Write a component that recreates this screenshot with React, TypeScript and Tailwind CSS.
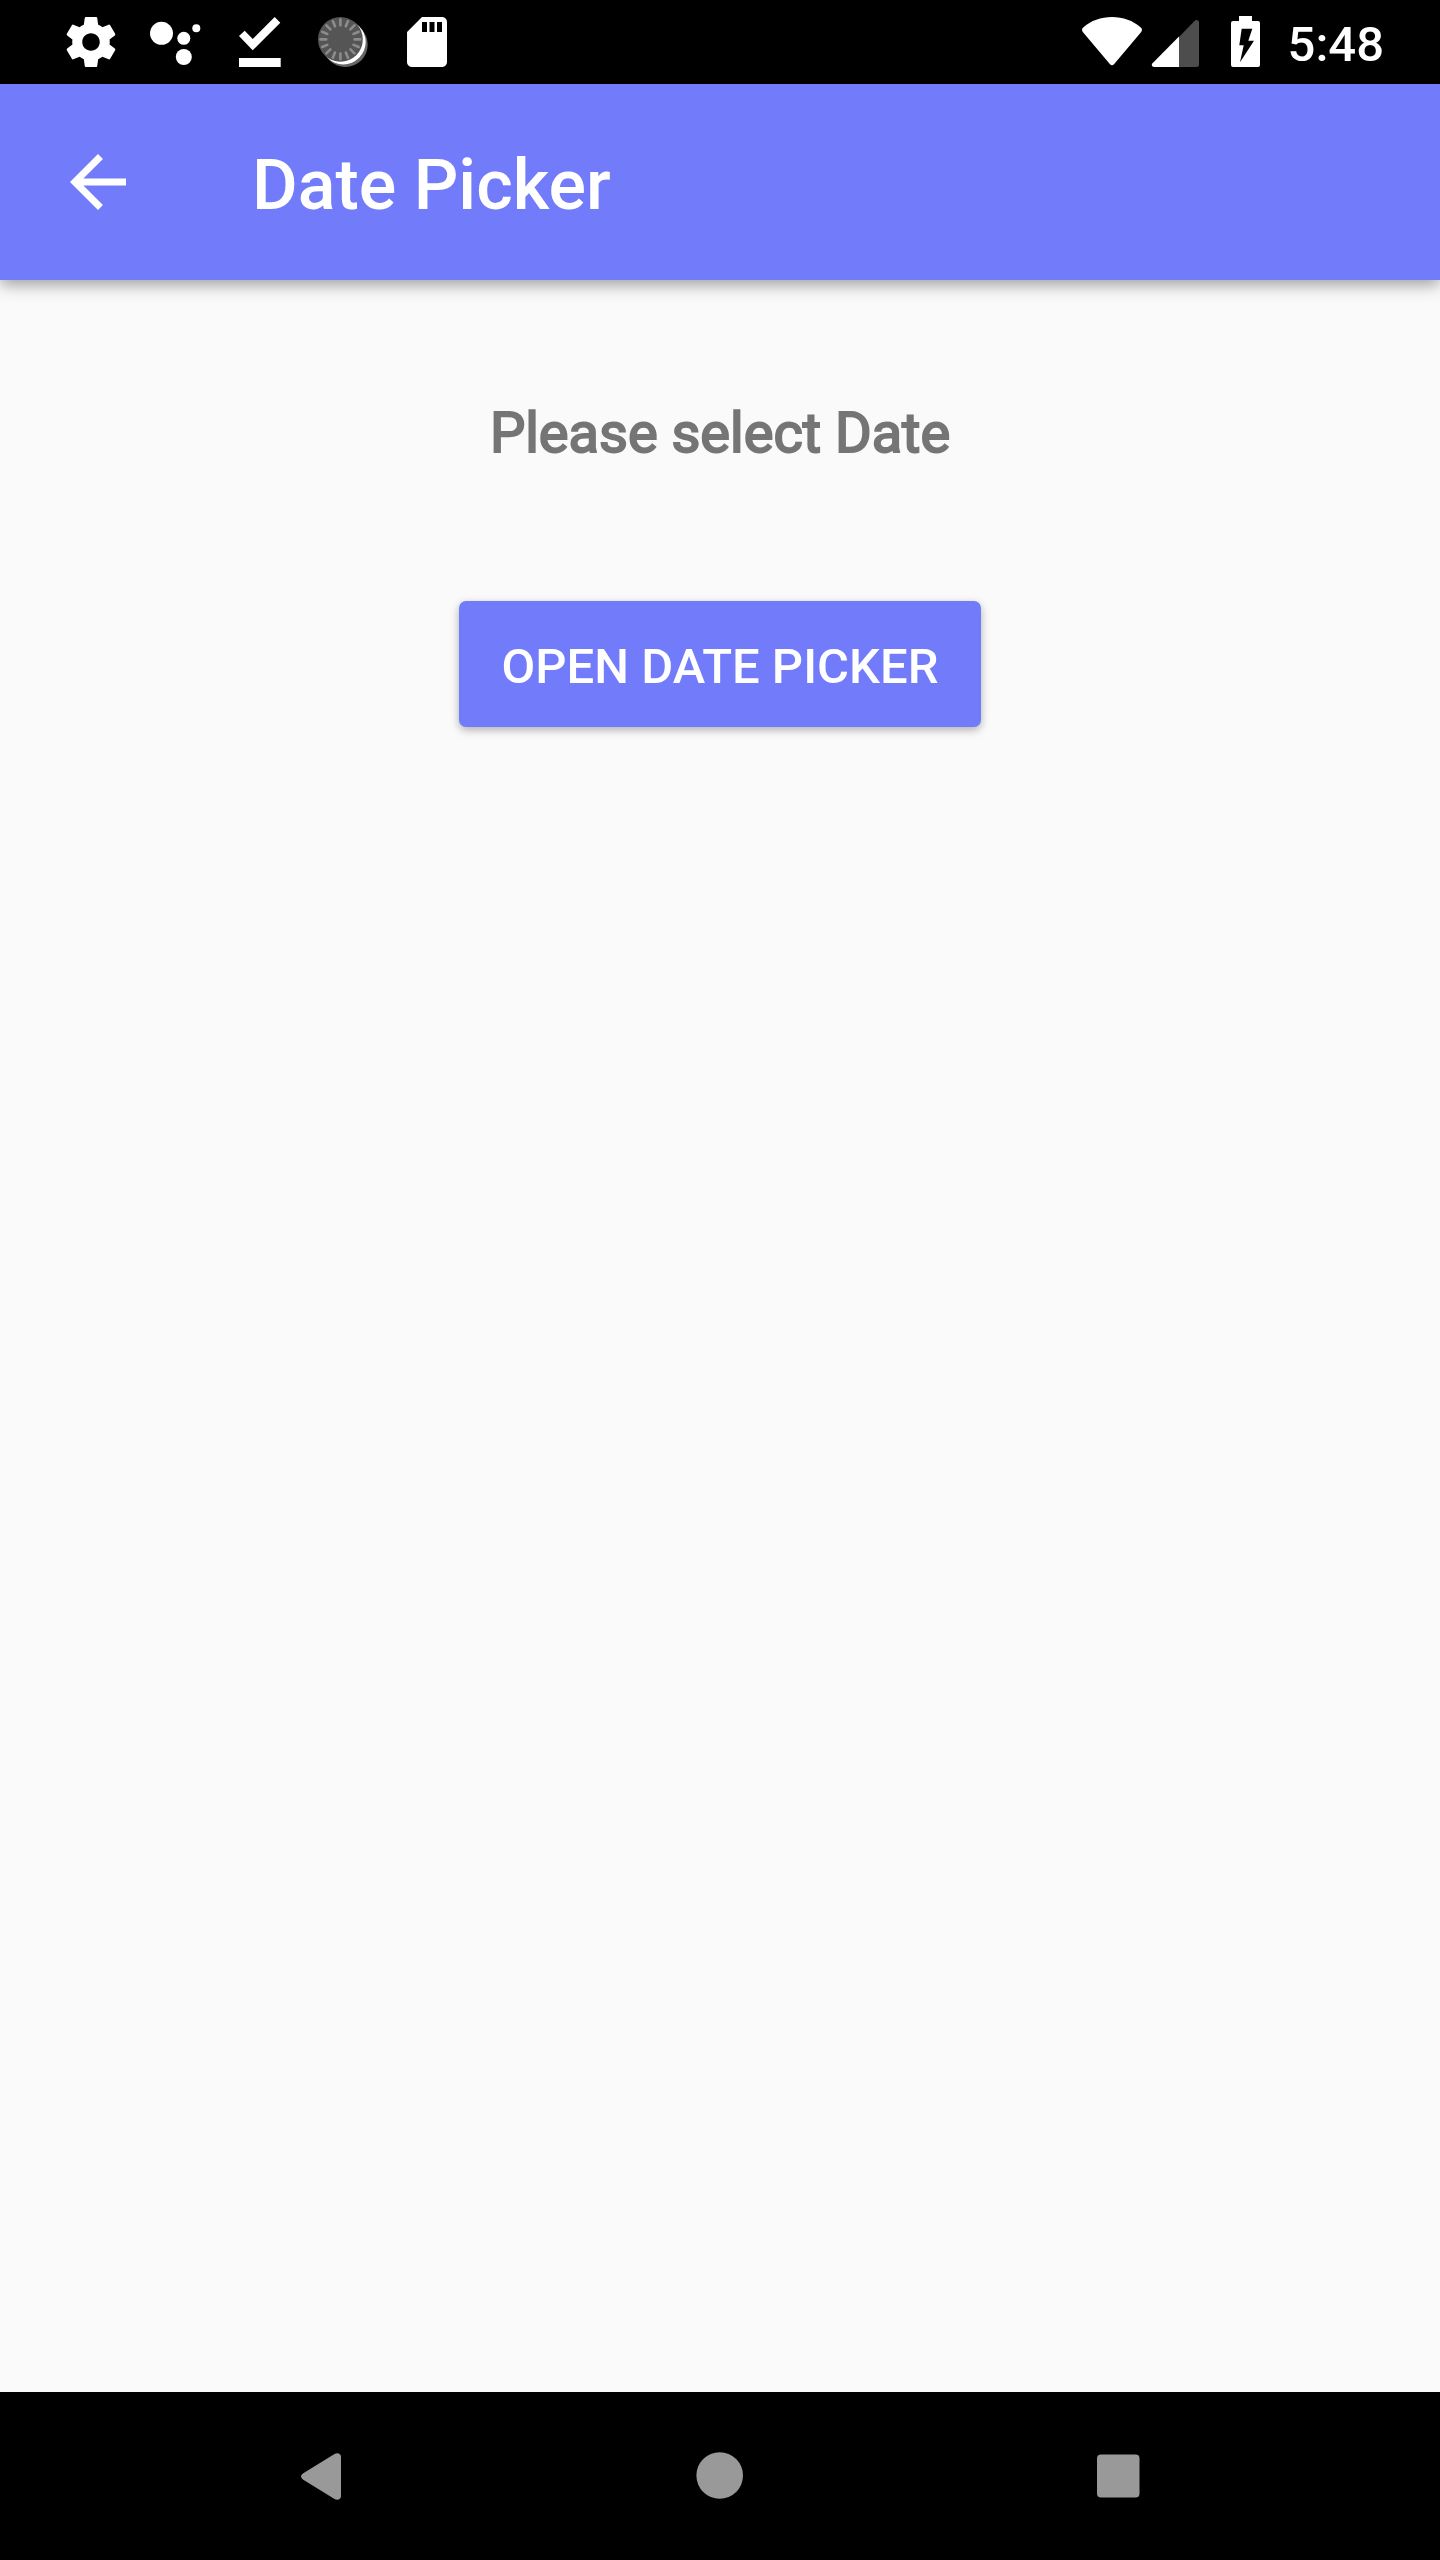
import type { ReactNode } from "react";

const TICKS = Array.from({ length: 16 }, (_, i) => i * 22.5);

function StatusIcon({ label, children }: { label: string; children: ReactNode }) {
  return (
    <svg role="img" aria-label={label} viewBox="0 0 60 60" className="size-15 shrink-0 fill-white">
      {children}
    </svg>
  );
}

function StatusBar() {
  return (
    <div className="flex h-21 items-center justify-between bg-black pr-14 pl-[61px] text-white">
      <div className="flex items-center gap-6">
        <StatusIcon label="Settings">
          <path
            transform="scale(2.5)"
            d="M19.43 12.98c.04-.32.07-.64.07-.98s-.03-.66-.07-.98l2.11-1.65c.19-.15.24-.42.12-.64l-2-3.46c-.12-.22-.39-.3-.61-.22l-2.49 1c-.52-.4-1.08-.73-1.69-.98l-.38-2.65C14.46 2.18 14.25 2 14 2h-4c-.25 0-.46.18-.49.42l-.38 2.65c-.61.25-1.17.59-1.69.98l-2.49-1c-.23-.09-.49 0-.61.22l-2 3.46c-.13.22-.07.49.12.64l2.11 1.65c-.04.32-.07.65-.07.98s.03.66.07.98l-2.11 1.65c-.19.15-.24.42-.12.64l2 3.46c.12.22.39.3.61.22l2.49-1c.52.4 1.08.73 1.69.98l.38 2.65c.03.24.24.42.49.42h4c.25 0 .46-.18.49-.42l.38-2.65c.61-.25 1.17-.59 1.69-.98l2.49 1c.23.09.49 0 .61-.22l2-3.46c.12-.22.07-.49-.12-.64l-2.11-1.65zM12 15.5c-1.93 0-3.5-1.57-3.5-3.5s1.57-3.5 3.5-3.5 3.5 1.57 3.5 3.5-1.57 3.5-3.5 3.5z"
          />
        </StatusIcon>
        <StatusIcon label="Assistant">
          <circle cx="16.5" cy="21.3" r="11.5" />
          <circle cx="38.8" cy="26.3" r="6.5" />
          <circle cx="51.3" cy="16.2" r="4" />
          <circle cx="38.8" cy="45" r="8" />
        </StatusIcon>
        <StatusIcon label="Download finished">
          <path d="M10 24l5.7-5.3 8 8.3 22-22 5.6 5.7-27.6 27.6zM10 46h41.7v9H10z" />
        </StatusIcon>
        <StatusIcon label="Loading">
          <circle cx="32.3" cy="32.6" r="22.4" fill="#666" />
          <circle cx="30.3" cy="30" r="22.4" fill="#fff" />
          <circle cx="27.4" cy="27.4" r="22.4" fill="#555" />
          {TICKS.map((angle) => (
            <path
              key={angle}
              d="M27.4 7.6v5.6"
              transform={`rotate(${angle} 27.4 27.4)`}
              stroke="#8c8c8c"
              strokeWidth="2.6"
              strokeLinecap="round"
            />
          ))}
        </StatusIcon>
        <StatusIcon label="SD card">
          <path
            transform="scale(2.5)"
            d="M18 2h-8L4.02 8 4 20c0 1.1.9 2 2 2h12c1.1 0 2-.9 2-2V4c0-1.1-.9-2-2-2zm-6 6h-2V4h2v4zm3 0h-2V4h2v4zm3 0h-2V4h2v4z"
          />
        </StatusIcon>
      </div>
      <div className="flex items-center">
        <StatusIcon label="Wi-Fi">
          <path d="M1.2 15.4C9 8.6 19 5 30 5s21 3.6 28.8 10.4c1.4 1.2 1.6 3 .4 4.5L32 52.2c-1.100 1.300-2.900 1.300-4 0L.8 19.900c-1.200-1.500-1-3.300.4-4.500z" />
        </StatusIcon>
        <span className="ml-1 flex">
          <StatusIcon label="Mobile signal">
            <path d="M33 25v30h17.500a2.500 2.500 0 0 0 2.500-2.500v-42c0-2.200-2.600-3.300-4.200-1.700z" fill="#4d4d4d" />
            <path d="M33 24.600v30.400H8c-2 0-2.900-2.200-1.500-3.700z" />
          </StatusIcon>
        </span>
        <span className="ml-[10px] flex">
          <StatusIcon label="Battery charging">
            <path
              fillRule="evenodd"
              d="M23 4h13v5h6a2 2 0 0 1 2 2v42a2 2 0 0 1-2 2H17a2 2 0 0 1-2-2V11a2 2 0 0 1 2-2h6zM25.700 16.700L23.300 33.300h4.400L24 50.300l14-21.600h-5.700l4-12z"
            />
          </StatusIcon>
        </span>
        <time className="ml-3 pt-1 text-[49px] leading-none font-medium">5:48</time>
      </div>
    </div>
  );
}

function AppBar() {
  return (
    <header className="z-10 flex h-49 items-center bg-[#727cfb] pl-14 text-white shadow-[0_4px_16px_rgba(0,0,0,0.4)]">
      <button type="button" aria-label="Back" className="size-21">
        <svg viewBox="0 0 24 24" className="size-full fill-white">
          <path d="M20 11H7.830l5.590-5.590L12 4l-8 8 8 8 1.410-1.410L7.830 13H20z" />
        </svg>
      </button>
      <h1 className="ml-28 pt-1.5 text-[70px] leading-none font-medium">Date Picker</h1>
    </header>
  );
}

function NavigationBar() {
  return (
    <nav className="flex h-42 items-center justify-center gap-[315px] bg-black">
      <button type="button" aria-label="Back" className="size-21">
        <svg viewBox="0 0 84 84" className="size-full fill-[#999]">
          <path d="M24.300 39.300L55.500 20.100c2.800-1.700 6.500-.6 6.500 2.900v39c0 3.500-3.700 4.600-6.500 2.900L24.300 45.700c-3-1.900-3-4.500 0-6.400z" />
        </svg>
      </button>
      <button type="button" aria-label="Home" className="size-21">
        <svg viewBox="0 0 84 84" className="size-full fill-[#999]">
          <circle cx="41.700" cy="41.500" r="23.300" />
        </svg>
      </button>
      <button type="button" aria-label="Recent apps" className="size-21">
        <svg viewBox="0 0 84 84" className="size-full fill-[#999]">
          <rect x="20" y="20.500" width="42.500" height="43" rx="4" />
        </svg>
      </button>
    </nav>
  );
}

export default function App() {
  return (
    <div className="flex min-h-screen flex-col bg-[#fafafa] font-['Roboto',sans-serif]">
      <StatusBar />
      <AppBar />
      <main className="flex flex-1 flex-col items-center pt-30">
        <p className="text-[56px] leading-[66px] text-[#757575] [-webkit-text-stroke:2px_#757575]">
          Please select Date
        </p>
        <button
          type="button"
          className="mt-[135px] h-[126px] rounded-[7px] bg-[#727cfb] px-[43px] pt-1 text-[49px] leading-none font-medium text-white uppercase shadow-[0_3px_8px_rgba(0,0,0,0.3)]"
        >
          Open Date Picker
        </button>
      </main>
      <NavigationBar />
    </div>
  );
}
